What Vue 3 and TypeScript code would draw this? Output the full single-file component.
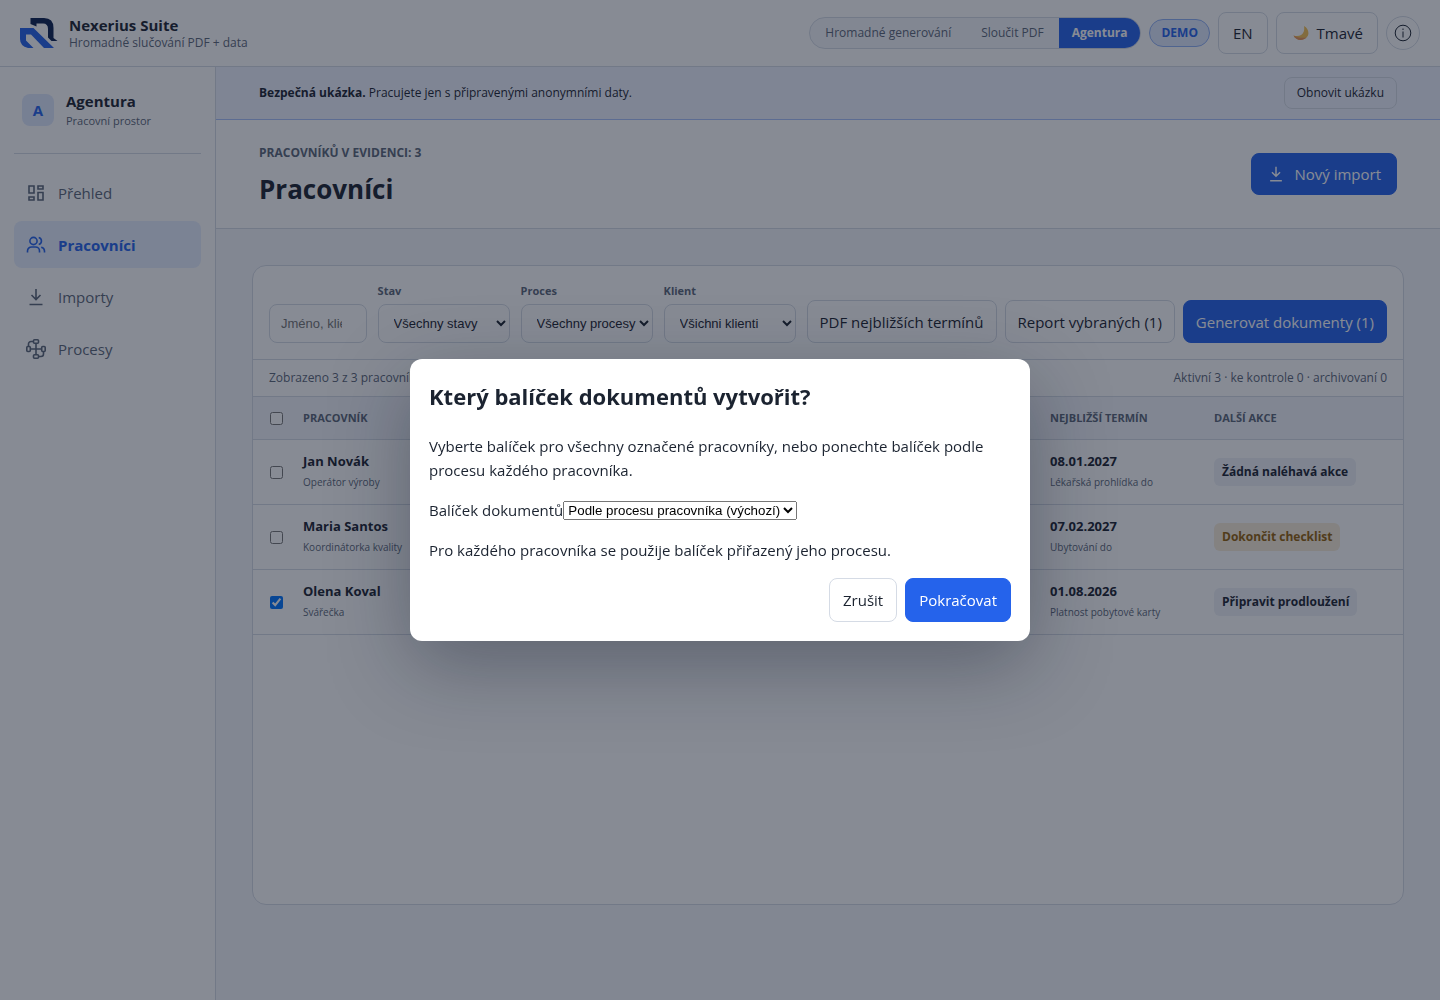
<script setup lang="ts">
import { ref } from 'vue'

interface Worker {
  name: string
  role: string
  date: string
  deadline: string
  action: string
  warn: boolean
  selected: boolean
}

const workers = ref<Worker[]>([
  { name: 'Jan Novák', role: 'Operátor výroby', date: '08.01.2027', deadline: 'Lékařská prohlídka do', action: 'Žádná naléhavá akce', warn: false, selected: false },
  { name: 'Maria Santos', role: 'Koordinátorka kvality', date: '07.02.2027', deadline: 'Ubytování do', action: 'Dokončit checklist', warn: true, selected: false },
  { name: 'Olena Koval', role: 'Svářečka', date: '01.08.2026', deadline: 'Platnost pobytové karty', action: 'Připravit prodloužení', warn: false, selected: true },
])

const filters = [
  { id: 'stav', label: 'Stav', option: 'Všechny stavy' },
  { id: 'proces', label: 'Proces', option: 'Všechny procesy' },
  { id: 'klient', label: 'Klient', option: 'Všichni klienti' },
]

const dialogOpen = ref(true)
</script>

<template>
  <div class="app">
    <header class="topbar">
      <svg class="logo" viewBox="0 0 38 32" aria-hidden="true">
        <path d="M10.5 1H24Q33.500 1 33.500 11V21L37.500 24H31.500L28 20.500V12Q28 6.500 23 6.500H16.500V9.500L10.500 7Z" fill="#0b2050" />
        <path d="M0 11H13.500L34 31H24L11 17.500H6V23.500L13.500 31H8Q0 29 0 22Z" fill="#2563eb" />
      </svg>
      <div class="brand">
        <strong>Nexerius Suite</strong>
        <span>Hromadné slučování PDF + data</span>
      </div>
      <div class="top-actions">
        <nav class="segments">
          <a href="#">Hromadné generování</a>
          <a href="#">Sloučit PDF</a>
          <a href="#" class="active">Agentura</a>
        </nav>
        <span class="demo">DEMO</span>
        <button type="button" class="btn lang">EN</button>
        <button type="button" class="btn theme">
          <svg viewBox="0 0 16 16" width="16" height="16" aria-hidden="true">
            <path d="M11 1C15.500 3.500 17 9 13.500 12.500C10 16 3 16 .5 10.500C5 12 9.500 10.500 10.800 6.500C11.400 4.500 11.300 2.500 11 1Z" fill="#f5c152" />
            <path d="M.5 10.500C3 16 10 16 13.500 12.500C10 13 4 13 .5 10.500Z" fill="#e8935a" />
          </svg>
          Tmavé
        </button>
        <button type="button" class="info" aria-label="Info">
          <svg viewBox="0 0 18 18" width="18" height="18" fill="none" stroke="#1b2330" aria-hidden="true">
            <circle cx="9" cy="9" r="7.800" />
            <path d="M9 7.500V13.500" />
            <path d="M9 4.500V6" />
          </svg>
        </button>
      </div>
    </header>

    <div class="shell">
      <aside class="sidebar">
        <div class="workspace">
          <span class="tile">A</span>
          <div class="workspace-name">
            <strong>Agentura</strong>
            <small>Pracovní prostor</small>
          </div>
        </div>
        <nav class="nav">
          <a href="#">
            <svg viewBox="0 0 20 20" class="icon"><path d="M3 3h5v7H3zM12 3h5v3h-5zM12 9.500h5V17h-5zM3 14h5v3H3z" /></svg>
            Přehled
          </a>
          <a href="#" class="active">
            <svg viewBox="0 0 20 20" class="icon"><circle cx="7.500" cy="6" r="3.600" /><path d="M1.500 17.500v-1.500a4 4 0 0 1 4-4h4a4 4 0 0 1 4 4v1.500M12.700 2.500a3.600 3.600 0 0 1 0 7M15.200 12.200a4 4 0 0 1 3.300 3.900v1.400" /></svg>
            Pracovníci
          </a>
          <a href="#">
            <svg viewBox="0 0 20 20" class="icon"><path d="M10 2v10M5.500 8l4.500 4.500L14.500 8M3.500 17.500h13" /></svg>
            Importy
          </a>
          <a href="#">
            <svg viewBox="0 0 20 20" class="icon"><rect x="7.500" y=".8" width="5" height="3.500" rx="1" /><rect x="7.500" y="15.700" width="5" height="3.500" rx="1" /><rect x=".8" y="7.500" width="3.500" height="5" rx="1" /><rect x="15.700" y="7.500" width="3.500" height="5" rx="1" /><path d="M4.300 10h11.400M10 4.300v11.400M7.500 2.500H5a2.500 2.500 0 0 0-2.500 2.500v2.500M12.500 17.500H15a2.500 2.500 0 0 0 2.500-2.500v-2.500" /></svg>
            Procesy
          </a>
        </nav>
      </aside>

      <main class="main">
        <div class="banner">
          <p><strong>Bezpečná ukázka.</strong> Pracujete jen s připravenými anonymními daty.</p>
          <button type="button" class="btn small">Obnovit ukázku</button>
        </div>
        <div class="page-head">
          <div>
            <p class="eyebrow">PRACOVNÍKŮ V EVIDENCI: 3</p>
            <h1>Pracovníci</h1>
          </div>
          <button type="button" class="btn primary">
            <svg viewBox="0 0 20 20" class="icon import"><path d="M10 2v10M5.500 8l4.500 4.500L14.500 8M3.500 17.500h13" /></svg>
            Nový import
          </button>
        </div>

        <section class="card">
          <div class="toolbar">
            <input class="control search" type="search" placeholder="Jméno, klient" aria-label="Jméno, klient" />
            <label v-for="f in filters" :key="f.id" class="field" :for="f.id">
              <span>{{ f.label }}</span>
              <select :id="f.id" class="control"><option>{{ f.option }}</option></select>
            </label>
            <div class="bulk">
              <button type="button" class="btn">PDF nejbližších termínů</button>
              <button type="button" class="btn">Report vybraných (1)</button>
              <button type="button" class="btn primary">Generovat dokumenty (1)</button>
            </div>
          </div>
          <div class="summary">
            <span>Zobrazeno 3 z 3 pracovníků</span>
            <span>Aktivní 3 · ke kontrole 0 · archivovaní 0</span>
          </div>
          <table>
            <thead>
              <tr>
                <th class="check"><input type="checkbox" aria-label="Pracovník" /></th>
                <th>PRACOVNÍK</th>
                <th class="deadline">NEJBLIŽŠÍ TERMÍN</th>
                <th class="action">DALŠÍ AKCE</th>
              </tr>
            </thead>
            <tbody>
              <tr v-for="w in workers" :key="w.name">
                <td class="check"><input v-model="w.selected" type="checkbox" :aria-label="w.name" /></td>
                <td><strong>{{ w.name }}</strong><small>{{ w.role }}</small></td>
                <td><strong>{{ w.date }}</strong><small>{{ w.deadline }}</small></td>
                <td><span class="tag" :class="{ warn: w.warn }">{{ w.action }}</span></td>
              </tr>
            </tbody>
          </table>
        </section>
      </main>
    </div>

    <div v-if="dialogOpen" class="overlay">
      <div class="dialog" role="dialog" aria-modal="true" aria-labelledby="dialog-title">
        <h2 id="dialog-title">Který balíček dokumentů vytvořit?</h2>
        <p>Vyberte balíček pro všechny označené pracovníky, nebo ponechte balíček podle procesu každého pracovníka.</p>
        <div class="package">
          <label for="package">Balíček dokumentů</label>
          <select id="package"><option>Podle procesu pracovníka (výchozí)</option></select>
        </div>
        <p>Pro každého pracovníka se použije balíček přiřazený jeho procesu.</p>
        <div class="dialog-actions">
          <button type="button" class="btn" @click="dialogOpen = false">Zrušit</button>
          <button type="button" class="btn primary" @click="dialogOpen = false">Pokračovat</button>
        </div>
      </div>
    </div>
  </div>
</template>

<style>
body {
  background: #f5f7fb;
}
</style>

<style scoped>
* {
  box-sizing: border-box;
}
.app {
  display: flex;
  flex-direction: column;
  min-height: 100vh;
  font-family: "Open Sans", "Noto Sans", sans-serif;
  font-size: 15px;
  line-height: 24px;
  color: #1b2330;
}
p, h1, h2 {
  margin: 0;
}
a {
  color: inherit;
  text-decoration: none;
}
.btn {
  display: inline-flex;
  align-items: center;
  justify-content: center;
  height: 42px;
  padding: 0 15px;
  border: 1px solid #d5dbe5;
  border-radius: 8px;
  background: #fff;
  color: #1b2330;
  font-family: inherit;
  font-size: 15px;
  line-height: 24px;
  white-space: nowrap;
}
.btn.primary {
  border-color: #2563eb;
  background: #2563eb;
  color: #fff;
}
.icon {
  width: 20px;
  height: 20px;
  flex: none;
  fill: none;
  stroke: currentColor;
  stroke-width: 1.6;
}
.topbar {
  display: flex;
  align-items: center;
  height: 67px;
  padding: 0 20px;
  border-bottom: 1px solid #d5dbe5;
  background: #fff;
}
.logo {
  width: 38px;
  height: 32px;
  margin-right: 11px;
}
.brand {
  display: flex;
  flex-direction: column;
  padding-top: 2px;
  line-height: 17px;
}
.brand span {
  font-size: 12px;
  color: #5b6678;
}
.top-actions {
  display: flex;
  align-items: center;
  gap: 8px;
  margin-left: auto;
}
.segments {
  display: flex;
  height: 32px;
  border: 1px solid #d5dbe5;
  border-radius: 16px;
  background: #f5f7fb;
  overflow: hidden;
  font-size: 12px;
  line-height: 30px;
  color: #5b6678;
}
.segments a {
  padding: 0 15px;
}
.segments .active {
  padding: 0 13px;
  background: #2563eb;
  color: #fff;
  font-weight: 700;
}
.demo {
  height: 28px;
  padding: 0 11px;
  border: 1px solid #8fb0f5;
  border-radius: 14px;
  background: #dfe8fd;
  color: #2563eb;
  font-size: 12px;
  font-weight: 700;
  line-height: 26px;
}
.lang {
  padding: 0 14px;
}
.theme {
  gap: 8px;
  padding: 0 14px 0 16px;
}
.info {
  display: grid;
  place-items: center;
  width: 34px;
  height: 34px;
  padding: 0;
  border: 1px solid #d5dbe5;
  border-radius: 50%;
  background: #fff;
}
.shell {
  display: flex;
  flex: 1;
}
.sidebar {
  width: 216px;
  flex: none;
  padding: 27px 14px;
  border-right: 1px solid #d5dbe5;
  background: #fff;
}
.workspace {
  display: flex;
  align-items: center;
  gap: 12px;
  height: 60px;
  padding: 0 8px 27px;
  border-bottom: 1px solid #d5dbe5;
}
.tile {
  width: 32px;
  height: 32px;
  border-radius: 8px;
  background: #dfe8fd;
  color: #2563eb;
  font-weight: 700;
  line-height: 32px;
  text-align: center;
}
.workspace-name {
  padding-top: 2px;
}
.workspace strong,
.workspace small {
  display: block;
  line-height: 20px;
}
.workspace small {
  font-size: 11px;
  color: #5b6678;
}
.nav {
  display: flex;
  flex-direction: column;
  gap: 5px;
  margin-top: 15px;
}
.nav a {
  display: flex;
  align-items: center;
  gap: 12px;
  height: 47px;
  padding: 0 12px;
  border-radius: 8px;
  color: #5b6678;
}
.nav .active {
  background: #e6eefe;
  color: #2563eb;
  font-weight: 700;
}
.main {
  flex: 1;
  min-width: 0;
}
.banner {
  display: flex;
  align-items: center;
  justify-content: space-between;
  height: 53px;
  padding: 0 43px;
  border-bottom: 1px solid #a9c1fb;
  background: #eff3ff;
  font-size: 12px;
}
.btn.small {
  height: 32px;
  padding: 0 12px;
  background: transparent;
  font-size: 12px;
}
.page-head {
  display: flex;
  align-items: center;
  justify-content: space-between;
  height: 109px;
  padding: 0 43px;
  border-bottom: 1px solid #d5dbe5;
  background: #fff;
}
.eyebrow {
  font-size: 12px;
  font-weight: 700;
  color: #5b6678;
}
h1 {
  margin-top: 6px;
  font-size: 26px;
  line-height: 36px;
}
.page-head .btn {
  gap: 9px;
}
.import {
  width: 18px;
  height: 18px;
}
.card {
  min-height: 640px;
  margin: 36px;
  border: 1px solid #d5dbe5;
  border-radius: 14px;
  background: #fff;
  overflow: hidden;
}
.toolbar {
  display: flex;
  align-items: flex-end;
  gap: 11px;
  padding: 16px;
  border-bottom: 1px solid #d5dbe5;
}
.control {
  width: 100%;
  height: 39px;
  padding: 0 0 0 11px;
  border: 1px solid #d5dbe5;
  border-radius: 8px;
  background: #fff;
  color: #1b2330;
  font-family: "Liberation Sans", sans-serif;
  font-size: 13px;
}
.search {
  flex: 1 1 0;
  min-width: 0;
  padding: 0 11px;
}
.field {
  width: 132px;
  flex: none;
  font-size: 11px;
  font-weight: 700;
  line-height: 18px;
  color: #5b6678;
}
.field span {
  display: block;
  margin-bottom: 4px;
}
.bulk {
  display: flex;
  gap: 8px;
}
.bulk .btn {
  height: 43px;
  padding: 0 12px;
}
.summary {
  display: flex;
  justify-content: space-between;
  padding: 6px 16px;
  border-bottom: 1px solid #d5dbe5;
  font-size: 12px;
  color: #5b6678;
}
table {
  width: 100%;
  border-collapse: separate;
  border-spacing: 0;
  table-layout: fixed;
}
th,
td {
  padding: 0 16px;
  border-bottom: 1px solid #d5dbe5;
  text-align: left;
}
th {
  height: 43px;
  background: #f3f5fa;
  font-size: 11px;
  color: #5b6678;
}
td {
  height: 65px;
}
.check {
  width: 34px;
  padding-right: 0;
}
.check input {
  display: block;
  width: 13px;
  height: 13px;
  margin: 0 1px;
}
.deadline {
  width: 164px;
}
.action {
  width: 205px;
}
td strong,
td small {
  display: block;
  line-height: 21px;
  white-space: nowrap;
}
td strong {
  font-size: 13px;
}
td small {
  font-size: 10px;
  color: #5b6678;
}
.tag {
  display: inline-block;
  padding: 0 8px;
  border-radius: 6px;
  background: #eef1f7;
  font-size: 12px;
  font-weight: 700;
  line-height: 28px;
  white-space: nowrap;
}
.tag.warn {
  background: #f9ecd8;
  color: #92610a;
}
.overlay {
  position: fixed;
  inset: 0;
  display: grid;
  place-items: center;
  background: rgba(15, 23, 42, 0.5);
}
.dialog {
  width: 620px;
  max-width: 100%;
  padding: 19px;
  border-radius: 12px;
  background: #fff;
  box-shadow: 0 24px 80px rgba(15, 23, 42, 0.35);
}
.dialog h2 {
  margin-bottom: 20px;
  font-size: 22px;
  line-height: 36px;
}
.dialog p,
.package {
  margin-bottom: 16px;
}
.package {
  display: flex;
  align-items: center;
}
.package select {
  font-family: "Liberation Sans", sans-serif;
}
.dialog-actions {
  display: flex;
  justify-content: flex-end;
  gap: 8px;
}
.dialog-actions .btn {
  height: 44px;
  padding: 0 13px;
}
</style>
